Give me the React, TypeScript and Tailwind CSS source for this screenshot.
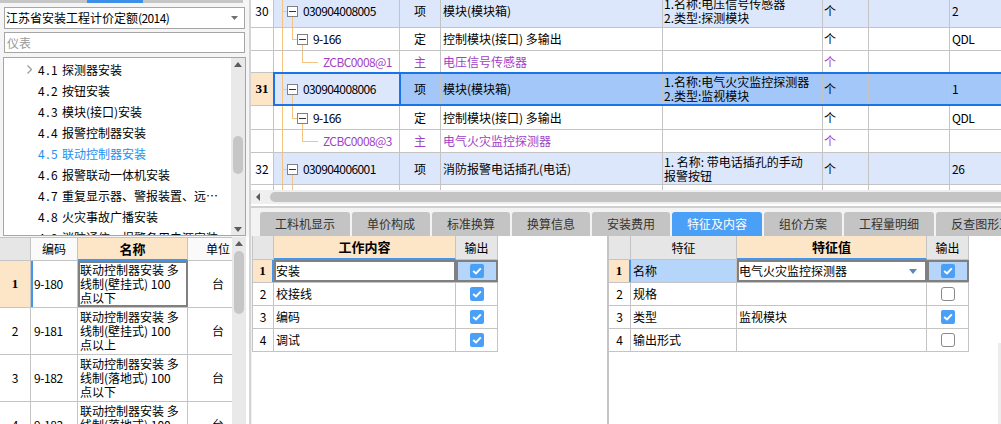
import React from "react";

const LN = "bg-[#f6c47e]";

function MinusBox({ pos }: { pos: string }) {
  return (
    <div className={`absolute top-1/2 -mt-[5px] w-[11px] h-[11px] border border-[#808080] bg-white flex items-center justify-center ${pos}`}>
      <div className="w-[7px] h-px bg-[#333]" />
    </div>
  );
}

type Kind = "item" | "def" | "main" | "blank";

function TreeCell({ kind, text }: { kind: Kind; text: string }) {
  return (
    <div className="relative w-[126px] shrink-0 border-r border-[#c4c4c4] h-full flex items-center whitespace-nowrap tracking-[-0.6px]">
      <div className={`absolute left-[8px] top-0 bottom-0 w-px ${LN}`} />
      {kind === "item" && (
        <>
          <div className={`absolute left-[8px] top-1/2 w-[5px] h-px ${LN}`} />
          <div className={`absolute left-[18px] top-1/2 bottom-0 w-px ${LN}`} />
          <MinusBox pos="left-[13px]" />
          <span className="pl-[29px]">{text}</span>
        </>
      )}
      {kind === "def" && (
        <>
          <div className={`absolute left-[18px] top-0 h-1/2 w-px ${LN}`} />
          <div className={`absolute left-[18px] top-1/2 w-[5px] h-px ${LN}`} />
          <div className={`absolute left-[28px] top-1/2 bottom-0 w-px ${LN}`} />
          <MinusBox pos="left-[23px]" />
          <span className="pl-[39px]">{text}</span>
        </>
      )}
      {kind === "main" && (
        <>
          <div className={`absolute left-[28px] top-0 h-1/2 w-px ${LN}`} />
          <div className={`absolute left-[28px] top-1/2 w-[16px] h-px ${LN}`} />
          <span className="pl-[49px] text-[#a23fc6]">{text}</span>
        </>
      )}
      {kind === "blank" && <div className={`absolute left-[18px] top-0 bottom-0 w-px ${LN}`} />}
    </div>
  );
}

type Row = {
  h: string;
  kind: Kind;
  num?: string;
  code?: string;
  t?: string;
  name?: string;
  feat?: string[];
  unit?: string;
  qty?: string;
  sel?: boolean;
};

const rows: Row[] = [
  { h: "h-[33px]", kind: "item", num: "30", code: "030904008005", t: "项", name: "模块(模块箱)", feat: ["1.名称:电压信号传感器", "2.类型:探测模块"], unit: "个", qty: "2" },
  { h: "h-[23px]", kind: "def", code: "9-166", t: "定", name: "控制模块(接口) 多输出", unit: "个", qty: "QDL" },
  { h: "h-[22px]", kind: "main", code: "ZCBC0008@1", t: "主", name: "电压信号传感器", unit: "个" },
  { h: "h-[33px]", kind: "item", num: "31", code: "030904008006", t: "项", name: "模块(模块箱)", feat: ["1.名称:电气火灾监控探测器", "2.类型:监视模块"], unit: "个", qty: "1", sel: true },
  { h: "h-[24px]", kind: "def", code: "9-166", t: "定", name: "控制模块(接口) 多输出", unit: "个", qty: "QDL" },
  { h: "h-[23px]", kind: "main", code: "ZCBC0008@3", t: "主", name: "电气火灾监控探测器", unit: "个" },
  { h: "h-[32px]", kind: "item", num: "32", code: "030904006001", t: "项", name: "消防报警电话插孔(电话)", feat: ["1. 名称: 带电话插孔的手动", "报警按钮"], unit: "个", qty: "26" },
  { h: "h-[14px]", kind: "blank" },
];

function TopRow({ r }: { r: Row }) {
  const bg = r.sel ? "bg-[#a3c7f8]" : r.kind === "item" ? "bg-[#dce7fb]" : "bg-white";
  const purple = r.kind === "main" ? "text-[#a23fc6]" : "";
  return (
    <div className={`relative flex border-b border-[#c4c4c4] ${r.h} ${bg}`}>
      <div
        className={`w-[23px] shrink-0 border-r border-[#c4c4c4] flex items-center justify-center ${
          r.sel ? "bg-[#fde6c8] font-bold font-['Liberation_Serif',serif] text-[13px]" : "bg-white"
        }`}
      >
        {r.num}
      </div>
      <div className={`shrink-0 h-full ${r.sel || r.kind === "item" ? "bg-[#dce7fb]" : ""}`}>
        <TreeCell kind={r.kind} text={r.code ?? ""} />
      </div>
      <div className={`w-[41px] shrink-0 border-r border-[#c4c4c4] flex items-center justify-center ${purple}`}>{r.t}</div>
      <div className={`w-[222px] shrink-0 border-r border-[#c4c4c4] flex items-center pl-[2px] whitespace-nowrap ${purple}`}>{r.name}</div>
      <div className="w-[160px] shrink-0 border-r border-[#c4c4c4] flex flex-col justify-center pl-[1px] whitespace-nowrap">
        {r.feat?.map((f) => (
          <div key={f}>{f}</div>
        ))}
      </div>
      <div className={`w-[46px] shrink-0 border-r border-[#c4c4c4] flex items-center pl-[1px] ${purple}`}>{r.unit}</div>
      <div className="w-[81px] shrink-0 border-r border-[#c4c4c4]" />
      <div className="flex-1 flex items-center pl-[2px] tracking-[-0.4px]">{r.qty}</div>
      {r.sel && (
        <>
          <div className="absolute left-[22px] right-0 -top-px -bottom-px border-y-2 border-[#1a73e8]" />
          <div className="absolute left-[22px] w-[128px] -top-px -bottom-px border-x-2 border-[#1a73e8]" />
        </>
      )}
    </div>
  );
}

function VScroll({ thumb, down }: { thumb: string; down?: boolean }) {
  return (
    <div className="w-[14px] shrink-0 bg-[#e9e9e9] flex flex-col items-center">
      <div className="h-[12px] w-full flex items-center justify-center shrink-0">
        <svg width="8" height="5" viewBox="0 0 8 5">
          <path d="M0 5 L4 0 L8 5Z" fill="#5c5c5c" />
        </svg>
      </div>
      <div className={`w-[10px] rounded-full bg-[#c6c6c6] shrink-0 ${thumb}`} />
      {down && (
        <div className="mt-auto h-[12px] w-full flex items-center justify-center shrink-0">
          <svg width="8" height="5" viewBox="0 0 8 5">
            <path d="M0 0 L8 0 L4 5Z" fill="#5c5c5c" />
          </svg>
        </div>
      )}
    </div>
  );
}

const treeItems: [string, string][] = [
  ["4.1", "探测器安装"],
  ["4.2", "按钮安装"],
  ["4.3", "模块(接口)安装"],
  ["4.4", "报警控制器安装"],
  ["4.5", "联动控制器安装"],
  ["4.6", "报警联动一体机安装"],
  ["4.7", "重复显示器、警报装置、远⋯"],
  ["4.8", "火灾事故广播安装"],
  ["4.9", "消防通信、报警备用电源安装"],
];

const quotaRows = [
  { n: "1", code: "9-180", lines: ["联动控制器安装 多", "线制(壁挂式) 100", "点以下"] },
  { n: "2", code: "9-181", lines: ["联动控制器安装 多", "线制(壁挂式) 100", "点以上"] },
  { n: "3", code: "9-182", lines: ["联动控制器安装 多", "线制(落地式) 100", "点以下"] },
  { n: "4", code: "9-183", lines: ["联动控制器安装 多", "线制(落地式) 100", "点以上"] },
];

function LeftPanel() {
  return (
    <div className="w-[251px] shrink-0 flex flex-col bg-[#f5f5f5] border-r-2 border-[#d4d4d4]">
      <div className="h-[3px] flex shrink-0">
        <div className="w-[87px] bg-[#c6c6c6]" />
        <div className="w-[56px] bg-[#3d8fe8]" />
        <div className="w-[100px] bg-[#c6c6c6]" />
      </div>
      <div className="mt-[4px] mx-[4px] h-[22px] shrink-0 border border-[#a6a6a6] bg-white flex items-center pl-[1px] pr-[6px] whitespace-nowrap">
        <span className="flex-1">
          江苏省安装工程计价定额<span className="tracking-[-0.6px]">(2014)</span>
        </span>
        <svg width="7" height="4" viewBox="0 0 7 4">
          <path d="M0 0 L7 0 L3.5 4Z" fill="#707070" />
        </svg>
      </div>
      <div className="mt-[3px] mx-[4px] h-[21px] shrink-0 border border-[#a6a6a6] bg-white flex items-center pl-[2px] text-[#9a9a9a]">
        仪表
      </div>
      <div className="mt-[4px] mx-[3px] h-[179px] shrink-0 border border-[#a6a6a6] bg-white flex">
        <div className="flex-1 min-w-0 pt-[1px] overflow-hidden">
          {treeItems.map(([n, t], i) => (
            <div key={n} className={`h-[21px] flex items-center whitespace-nowrap ${i === 4 ? "text-[#1e8ef0]" : ""}`}>
              <span className="w-[34px] shrink-0 pl-[23px] flex items-center">
                {i === 0 && (
                  <svg width="5" height="9" viewBox="0 0 5 9">
                    <path d="M0.5 0.5 L4.5 4.5 L0.5 8.5" stroke="#a0a0a0" strokeWidth="1.4" fill="none" />
                  </svg>
                )}
              </span>
              <span className="w-[24px] shrink-0 tracking-[1.5px]">{n}</span>
              <span>{t}</span>
            </div>
          ))}
        </div>
        <VScroll thumb="mt-[66px] h-[38px]" down />
      </div>
      <div className="mt-[1px] flex-1 min-h-0 flex bg-white">
        <div className="flex-1 min-w-0 overflow-hidden border-t border-[#c4c4c4]">
          <div className="flex h-[23px]">
            <div className="w-[31px] shrink-0 bg-[#e6e6e6] border-r border-b border-[#c4c4c4]" />
            <div className="w-[47px] shrink-0 bg-[#fafafa] border-r border-b border-[#c4c4c4] flex items-center justify-center">编码</div>
            <div className="w-[110px] shrink-0 bg-[#fde6c8] border-r border-r-[#c4c4c4] border-b-2 border-b-[#4596ea] flex items-center justify-center font-bold text-[13px]">
              名称
            </div>
            <div className="flex-1 bg-[#fafafa] border-b border-[#c4c4c4] flex items-center pl-[18px] whitespace-nowrap">单位</div>
          </div>
          {quotaRows.map((r, i) => {
            const first = i === 0;
            return (
              <div key={r.n} className="flex h-[47px] border-b border-[#c4c4c4]">
                <div
                  className={`w-[31px] shrink-0 border-r border-[#c4c4c4] flex items-center justify-center ${
                    first ? "bg-[#fde6c8] font-bold font-['Liberation_Serif',serif] text-[13px]" : ""
                  }`}
                >
                  {r.n}
                </div>
                <div
                  className={`w-[47px] shrink-0 border-r border-[#c4c4c4] flex items-center tracking-[-0.4px] ${
                    first ? "border-l-2 border-l-[#4596ea] pl-[1px]" : "pl-[3px]"
                  }`}
                >
                  {r.code}
                </div>
                <div
                  className={`w-[110px] shrink-0 flex flex-col justify-center whitespace-nowrap ${
                    first ? "border-2 border-[#808080]" : "border-r border-[#c4c4c4] pl-[2px]"
                  }`}
                >
                  {r.lines.map((l) => (
                    <div key={l}>{l}</div>
                  ))}
                </div>
                <div className="flex-1 flex items-center pl-[24px]">台</div>
              </div>
            );
          })}
        </div>
        <div className="mr-[3px] flex">
          <VScroll thumb="mt-[2px] h-[63px]" />
        </div>
      </div>
    </div>
  );
}

function Check({ on }: { on: boolean }) {
  return on ? (
    <div className="w-[14px] h-[14px] rounded-[2px] bg-[#4a9ff6] flex items-center justify-center">
      <svg width="10" height="8" viewBox="0 0 10 8">
        <path d="M1.2 4 L4 6.4 L8.8 1.4" stroke="white" strokeWidth="2" fill="none" />
      </svg>
    </div>
  ) : (
    <div className="w-[14px] h-[14px] rounded-[3px] border border-[#8a8a8a] bg-white" />
  );
}

const tabs = ["工料机显示", "单价构成", "标准换算", "换算信息", "安装费用", "特征及内容", "组价方案", "工程量明细", "反查图形工程量"];

const workRows = ["安装", "校接线", "编码", "调试"];
const featRows: [string, string, boolean][] = [
  ["名称", "电气火灾监控探测器", true],
  ["规格", "", false],
  ["类型", "监视模块", true],
  ["输出形式", "", false],
];

function Bottom() {
  return (
    <div className="flex-1 min-h-0 flex">
      <div className="w-[356px] shrink-0 bg-[#f0f0f0] pl-[1px]">
        <div className="h-full bg-white">
          <div className="w-[246px] border-l border-[#c4c4c4]">
            <div className="flex h-[24px]">
              <div className="w-[21px] shrink-0 bg-[#e6e6e6] border-r border-b border-[#c4c4c4]" />
              <div className="w-[182px] shrink-0 bg-[#fde6c8] border-r border-r-[#c4c4c4] border-b-2 border-b-[#4596ea] flex items-center justify-center font-bold text-[13px]">
                工作内容
              </div>
              <div className="w-[42px] shrink-0 bg-[#e6e6e6] border-r border-b border-[#c4c4c4] flex items-center justify-center">输出</div>
            </div>
            {workRows.map((w, i) => {
              const first = i === 0;
              return (
                <div key={w} className="flex h-[23px] border-b border-[#c4c4c4]">
                  <div
                    className={`w-[21px] shrink-0 flex items-center justify-center ${
                      first
                        ? "bg-[#fde6c8] font-bold font-['Liberation_Serif',serif] text-[13px] border-r-2 border-[#4596ea]"
                        : "border-r border-[#c4c4c4]"
                    }`}
                  >
                    {i + 1}
                  </div>
                  <div
                    className={`w-[182px] shrink-0 flex items-center ${
                      first ? "border-2 border-[#808080]" : "border-r border-[#c4c4c4] pl-[2px]"
                    }`}
                  >
                    {w}
                  </div>
                  <div
                    className={`w-[42px] shrink-0 flex items-center justify-center ${
                      first ? "bg-[#b5d5fb] border-2 border-[#808080]" : "border-r border-[#c4c4c4]"
                    }`}
                  >
                    <Check on />
                  </div>
                </div>
              );
            })}
          </div>
        </div>
      </div>
      <div className="w-[2px] shrink-0 bg-[#c4c4c4]" />
      <div className="flex-1 bg-white relative">
        <div className="w-[360px]">
          <div className="flex h-[24px]">
            <div className="w-[22px] shrink-0 bg-[#e6e6e6] border-r border-b border-[#c4c4c4]" />
            <div className="w-[106px] shrink-0 bg-[#e6e6e6] border-r border-b border-[#c4c4c4] flex items-center justify-center">特征</div>
            <div className="w-[190px] shrink-0 bg-[#fde6c8] border-r border-r-[#c4c4c4] border-b-2 border-b-[#4596ea] flex items-center justify-center font-bold text-[13px]">
              特征值
            </div>
            <div className="w-[42px] shrink-0 bg-[#e6e6e6] border-r border-b border-[#c4c4c4] flex items-center justify-center">输出</div>
          </div>
          {featRows.map(([k, v, on], i) => {
            const first = i === 0;
            return (
              <div key={k} className="flex h-[23px] border-b border-[#c4c4c4]">
                <div
                  className={`w-[22px] shrink-0 flex items-center justify-center ${
                    first
                      ? "bg-[#fde6c8] font-bold font-['Liberation_Serif',serif] text-[13px] border-r-2 border-[#4596ea]"
                      : "border-r border-[#c4c4c4]"
                  }`}
                >
                  {i + 1}
                </div>
                <div className={`w-[106px] shrink-0 border-r border-[#c4c4c4] flex items-center pl-[2px] ${first ? "bg-[#b5d5fb]" : ""}`}>{k}</div>
                <div
                  className={`w-[190px] shrink-0 flex items-center whitespace-nowrap ${
                    first ? "border-2 border-[#808080] pr-[8px]" : "border-r border-[#c4c4c4] pl-[2px]"
                  }`}
                >
                  <span className="flex-1">{v}</span>
                  {first && (
                    <svg width="8" height="5" viewBox="0 0 8 5">
                      <path d="M0 0 L8 0 L4 5Z" fill="#5b88b8" />
                    </svg>
                  )}
                </div>
                <div
                  className={`w-[42px] shrink-0 flex items-center justify-center ${
                    first ? "bg-[#b5d5fb] border-2 border-[#808080]" : "border-r border-[#c4c4c4]"
                  }`}
                >
                  <Check on={on} />
                </div>
              </div>
            );
          })}
        </div>
        <div className="absolute right-0 top-[107px] bottom-0 w-[3px] bg-[#ececec]" />
      </div>
    </div>
  );
}

export default function App() {
  return (
    <div className="w-[1001px] h-[424px] overflow-hidden flex bg-white text-[12px] leading-[14px] text-black font-['Noto_Sans_CJK_SC',sans-serif]">
      <LeftPanel />
      <div className="flex-1 min-w-0 flex flex-col">
        <div className="h-[190px] shrink-0 overflow-hidden">
          <div className="-mt-[5px]">
            {rows.map((r, i) => (
              <TopRow key={i} r={r} />
            ))}
          </div>
        </div>
        <div className="h-[14px] shrink-0 bg-[#efefef] flex items-center pl-[5px]">
          <svg width="4" height="8" viewBox="0 0 4 8">
            <path d="M4 0 L4 8 L0 4Z" fill="#5c5c5c" />
          </svg>
          <div className="ml-[10px] flex-1 h-[10px] rounded-l-full bg-[#c4c4c4]" />
        </div>
        <div className="h-[2px] shrink-0 bg-white" />
        <div className="h-[2px] shrink-0 bg-[#d0d0d0]" />
        <div className="h-[28px] shrink-0 bg-[#f3f3f3] pt-[4px] pl-[9px] flex gap-[2px] overflow-hidden">
          {tabs.map((t) => (
            <div
              key={t}
              className={`h-[24px] px-[15px] rounded-t-[3px] flex items-center shrink-0 whitespace-nowrap ${
                t === "特征及内容" ? "bg-[#4a9ff6] text-white" : "bg-[#c4c4c4] text-[#333]"
              }`}
            >
              {t}
            </div>
          ))}
        </div>
        <Bottom />
      </div>
    </div>
  );
}
